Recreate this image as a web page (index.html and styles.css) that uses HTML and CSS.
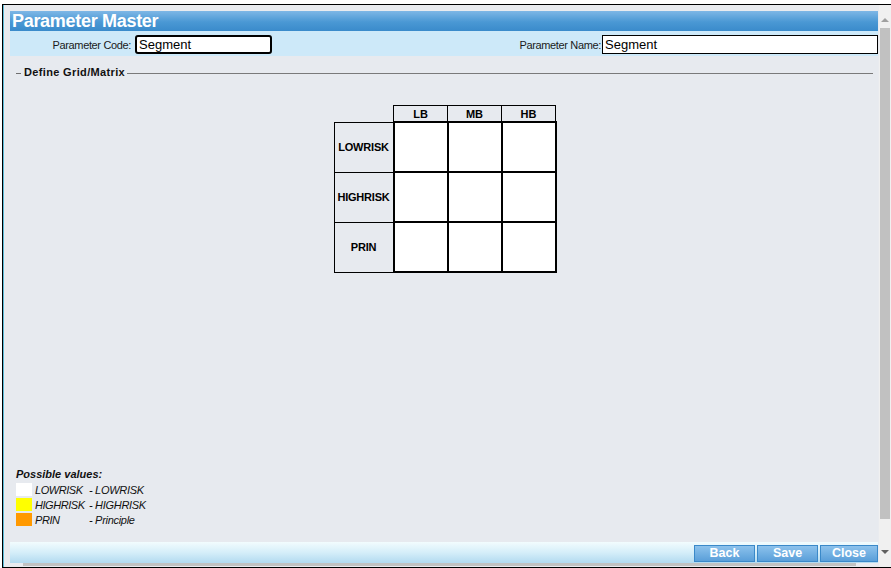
FILE: index.html
```html
<!DOCTYPE html>
<html>
<head>
<meta charset="utf-8">
<title>Parameter Master</title>
<link rel="stylesheet" href="styles.css">
</head>
<body>
<div class="window">
  <div class="main">
    <div class="panel">
      <div class="title">Parameter Master</div>
      <div class="fields">
        <div class="field field-code">
          <label class="lbl">Parameter Code:</label>
          <div class="input input-code">Segment</div>
        </div>
        <div class="field field-name">
          <label class="lbl">Parameter Name:</label>
          <div class="input input-name">Segment</div>
        </div>
      </div>
      <div class="content">
        <div class="legend-row">
          <span class="dash"></span>
          <span class="legend">Define Grid/Matrix</span>
          <span class="rule"></span>
        </div>
        <div class="grid-wrap">
          <table class="matrix">
            <tr>
              <th class="corner"></th>
              <th class="col">LB</th>
              <th class="col">MB</th>
              <th class="col">HB</th>
            </tr>
            <tr>
              <th class="rowh">LOWRISK</th>
              <td></td><td></td><td></td>
            </tr>
            <tr>
              <th class="rowh">HIGHRISK</th>
              <td></td><td></td><td></td>
            </tr>
            <tr>
              <th class="rowh">PRIN</th>
              <td></td><td></td><td></td>
            </tr>
          </table>
        </div>
        <div class="values">
          <div class="values-title">Possible values:</div>
          <div class="value"><span class="sw sw-white"></span><span class="code">LOWRISK</span><span class="desc">- LOWRISK</span></div>
          <div class="value"><span class="sw sw-yellow"></span><span class="code">HIGHRISK</span><span class="desc">- HIGHRISK</span></div>
          <div class="value"><span class="sw sw-orange"></span><span class="code">PRIN</span><span class="desc">- Principle</span></div>
        </div>
      </div>
      <div class="buttons">
        <button class="btn">Back</button>
        <button class="btn">Save</button>
        <button class="btn">Close</button>
      </div>
    </div>
    <div class="hscroll"><div class="hthumb"></div></div>
  </div>
  <div class="vscroll">
    <div class="arrow up"></div>
    <div class="vthumb"></div>
    <div class="arrow down"></div>
  </div>
</div>
</body>
</html>
```

FILE: styles.css
```css
html, body {
  margin: 0;
  padding: 0;
  background: #ffffff;
  font-family: "Liberation Sans", Arial, sans-serif;
}

.window {
  margin: 4px 0 0 2px;
  height: 562px;
  border-top: 1px solid #000;
  border-left: 1px solid #000;
  border-bottom: 1px solid #000;
  display: flex;
  background: #e9ebee;
}

.main {
  width: 876px;
  border-left: 1px solid #5cbcd8;
  display: flex;
  flex-direction: column;
  padding: 6px 0 0 6px;
  box-sizing: border-box;
  background: #e9ebef;
}

.panel {
  width: 868px;
  flex: 1;
  display: flex;
  flex-direction: column;
  background: #e7eaef;
}

.title {
  height: 20px;
  background: linear-gradient(#7eb7e6, #4a98d4 55%, #3a8bcb);
  color: #fff;
  font-weight: bold;
  font-size: 18px;
  line-height: 21px;
  padding-left: 2px;
  letter-spacing: -0.3px;
}

.fields {
  height: 25px;
  background: #cde9f9;
  display: flex;
  align-items: flex-start;
  padding-top: 4px;
  box-sizing: border-box;
  font-size: 11px;
}

.field {
  display: flex;
  align-items: center;
}

.field-code {
  width: 262px;
  justify-content: flex-end;
}

.field-name {
  flex: 1;
  justify-content: flex-end;
}

.lbl {
  color: #1a1a1a;
  margin-right: 4px;
  letter-spacing: -0.35px;
}

.field-name .lbl {
  margin-right: 1px;
}

.input {
  height: 19px;
  box-sizing: border-box;
  background: #fff;
  font-size: 13px;
  line-height: 17px;
  color: #000;
  padding-left: 2px;
}

.input-code {
  width: 137px;
  border: 2px solid #000;
  border-radius: 3px;
  line-height: 15px;
}

.input-name {
  width: 276px;
  border: 1px solid #000;
}

.content {
  flex: 1;
  display: flex;
  flex-direction: column;
  padding: 10px 5px 0 4px;
}

.legend-row {
  display: flex;
  align-items: center;
  height: 12px;
}

.dash {
  width: 5px;
  border-top: 1px solid #6f6f6f;
  margin: 2px 3px 0 2px;
}

.legend {
  font-size: 11px;
  font-weight: bold;
  color: #111;
  letter-spacing: 0.35px;
}

.rule {
  flex: 1;
  border-top: 1px solid #7a7a7a;
  margin: 2px 0 0 2px;
}

.grid-wrap {
  display: flex;
  justify-content: center;
  padding-top: 27px;
}

.matrix {
  border-collapse: collapse;
  font-size: 11px;
  margin-left: 3px;
}

.matrix th, .matrix td {
  padding: 0;
}

.corner {
  border: none;
  width: 59px;
}

.col {
  height: 15px;
  width: 53px;
  border: 1px solid #000;
  border-bottom: 2px solid #000;
  background: #e7eaef;
  font-weight: bold;
  line-height: 14px;
}

.rowh {
  height: 49px;
  border: 1px solid #000;
  border-right: 2px solid #000;
  background: #e7eaef;
  font-weight: bold;
  font-size: 11px;
  letter-spacing: -0.2px;
}

.matrix td {
  border: 2px solid #000;
  background: #fff;
}

.values {
  margin-top: auto;
  padding: 0 0 15px 2px;
  font-size: 11px;
  font-style: italic;
  color: #111;
}

.values-title {
  font-weight: bold;
  margin-bottom: 1px;
  line-height: 13px;
}

.value {
  display: flex;
  align-items: center;
  height: 15px;
}

.sw {
  width: 16px;
  height: 13px;
  margin-right: 3px;
  flex-shrink: 0;
}

.sw-white { background: #ffffff; }
.sw-yellow { background: #ffff00; }
.sw-orange { background: #ff9900; }

.code {
  width: 54px;
  flex-shrink: 0;
  white-space: nowrap;
  letter-spacing: -0.45px;
}

.desc {
  letter-spacing: -0.3px;
}

.buttons {
  height: 21px;
  background: linear-gradient(#f2fcfe, #d5eef9 50%, #b2daf0);
  display: flex;
  justify-content: flex-end;
  align-items: center;
  gap: 2px;
  padding-top: 1px;
  box-sizing: border-box;
}

.btn {
  height: 17px;
  width: 61px;
  border: 1px solid #3a89c9;
  background: linear-gradient(#8cc2ec, #5a9fd9);
  color: #fff;
  font-family: "Liberation Sans", Arial, sans-serif;
  font-weight: bold;
  font-size: 12.5px;
  line-height: 15px;
  padding: 0;
}

.btn:last-child {
  width: 58px;
}

.hscroll {
  height: 4px;
  padding: 0 0 0 13px;
  box-sizing: border-box;
}

.hthumb {
  width: 833px;
  height: 3px;
  background: #c2c2c2;
}

.vscroll {
  width: 12px;
  background: #f0f0f0;
  display: flex;
  flex-direction: column;
  align-items: center;
}

.arrow {
  width: 0;
  height: 0;
  border-left: 4px solid transparent;
  border-right: 4px solid transparent;
}

.arrow.up {
  margin-top: 13px;
  border-bottom: 4px solid #a0a0a0;
}

.arrow.down {
  margin-bottom: 13px;
  border-top: 4px solid #606060;
}

.vthumb {
  width: 10px;
  flex: 0 0 491px;
  margin: 6px 0 auto 0;
  background: #c1c1c1;
}
```
